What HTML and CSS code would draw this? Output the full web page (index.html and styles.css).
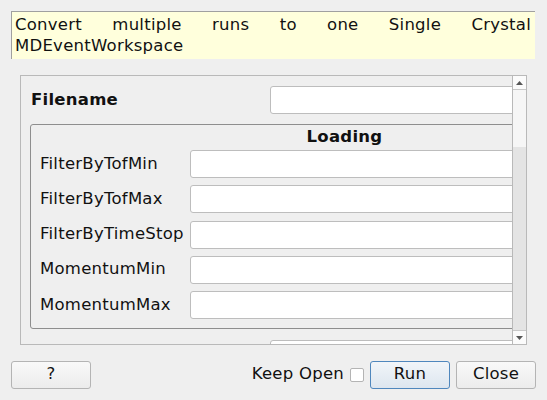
FILE: index.html
```html
<!DOCTYPE html>
<html>
<head>
<meta charset="utf-8">
<link rel="stylesheet" href="styles.css">
</head>
<body>
<div class="desc">Convert multiple runs to one Single Crystal MDEventWorkspace</div>
<div class="scroll">
  <div class="viewport">
    <div class="content">
      <div class="frow"><span class="flabel">Filename</span><div class="input wide"></div></div>
      <div class="group">
        <div class="gtitle">Loading</div>
        <div class="grow"><span class="glabel">FilterByTofMin</span><div class="input"></div></div>
        <div class="grow"><span class="glabel">FilterByTofMax</span><div class="input"></div></div>
        <div class="grow"><span class="glabel">FilterByTimeStop</span><div class="input"></div></div>
        <div class="grow"><span class="glabel">MomentumMin</span><div class="input"></div></div>
        <div class="grow"><span class="glabel">MomentumMax</span><div class="input"></div></div>
      </div>
      <div class="frow next"><span class="flabel"></span><div class="input wide"></div></div>
    </div>
  </div>
  <div class="sbar">
    <div class="sbtn up"><svg width="7" height="4" viewBox="0 0 7 4"><path d="M0 4 L3.5 0 L7 4 Z" fill="#555"/></svg></div>
    <div class="handle"></div>
    <div class="track"></div>
    <div class="sbtn down"><svg width="7" height="4" viewBox="0 0 7 4"><path d="M0 0 L7 0 L3.5 4 Z" fill="#555"/></svg></div>
  </div>
</div>
<div class="footer">
  <div class="btn">?</div>
  <div class="spacer"></div>
  <span class="keep">Keep Open</span>
  <div class="check"></div>
  <div class="btn run">Run</div>
  <div class="btn close">Close</div>
</div>
</body>
</html>
```
FILE: styles.css
```css
* { box-sizing: border-box; }
body {
  margin: 0;
  width: 547px;
  height: 400px;
  overflow: hidden;
  background: #efefef;
  font-family: "DejaVu Sans", sans-serif;
  font-size: 16.5px;
  letter-spacing: 0.25px;
  color: #111;
}
.desc {
  margin: 11px 0 0 11px;
  width: 524px;
  height: 48px;
  background: #ffffdc;
  border-left: 1px solid #a0a0a0;
  border-top: 1px solid #a0a0a0;
  padding: 2px 4px 3px 3px;
  line-height: 21px;
  text-align: justify;
}
.scroll {
  margin: 16px 0 0 20px;
  width: 507px;
  height: 270px;
  border: 1px solid #b9b9b9;
  display: flex;
}
.viewport {
  flex: 1;
  overflow: hidden;
}
.content {
  width: 660px;
  padding: 10px 0 0 10px;
}
.frow {
  display: flex;
  align-items: center;
  height: 28px;
}
.frow.next { margin-top: 11px; }
.flabel {
  width: 239px;
  flex: none;
  font-weight: bold;
  padding-bottom: 2px;
}
.input {
  height: 28px;
  background: #fff;
  border: 1px solid #bdbdbd;
  border-radius: 3px;
}
.input.wide { width: 380px; }
.group {
  margin: 10px 0 0 -1px;
  width: 629px;
  border: 1px solid #8e8e8e;
  border-radius: 3px;
  padding: 0 9px 9px 9px;
}
.gtitle {
  height: 25px;
  line-height: 24px;
  text-align: center;
  font-weight: bold;
}
.grow {
  display: flex;
  align-items: center;
  height: 28px;
  margin-top: 7.25px;
}
.gtitle + .grow { margin-top: 0; }
.glabel {
  width: 150px;
  flex: none;
  padding-bottom: 2px;
}
.grow .input { flex: 1; }
.sbar {
  width: 14px;
  flex: none;
  border-left: 1px solid #b9b9b9;
  display: flex;
  flex-direction: column;
  background: #e4e4e4;
}
.sbtn {
  height: 14px;
  flex: none;
  background: #fbfbfb;
  display: flex;
  align-items: center;
  justify-content: center;
}
.sbtn.up { border-bottom: 1px solid #c8c8c8; }
.sbtn.down { border-top: 1px solid #c8c8c8; }
.handle {
  height: 57px;
  flex: none;
  background: #f6f6f6;
}
.track { flex: 1; }
.footer {
  display: flex;
  align-items: center;
  margin-top: 16px;
  padding: 0 11px;
  height: 28px;
}
.spacer { flex: 1; }
.btn {
  width: 80px;
  height: 28px;
  border: 1px solid #b4b4b4;
  border-radius: 3px;
  background: linear-gradient(#f9f9f9, #ececec);
  display: flex;
  align-items: center;
  justify-content: center;
  padding-bottom: 3px;
}
.keep { white-space: nowrap; padding-bottom: 3px; }
.check {
  width: 14px;
  height: 14px;
  margin-left: 6px;
  background: #fff;
  border: 1px solid #b4b4b4;
  border-radius: 2px;
}
.btn.run {
  margin-left: 6px;
  border-color: #4f87bd;
  background: linear-gradient(#f1f5f9, #dde6ef);
}
.btn.close { margin-left: 6px; }
```
